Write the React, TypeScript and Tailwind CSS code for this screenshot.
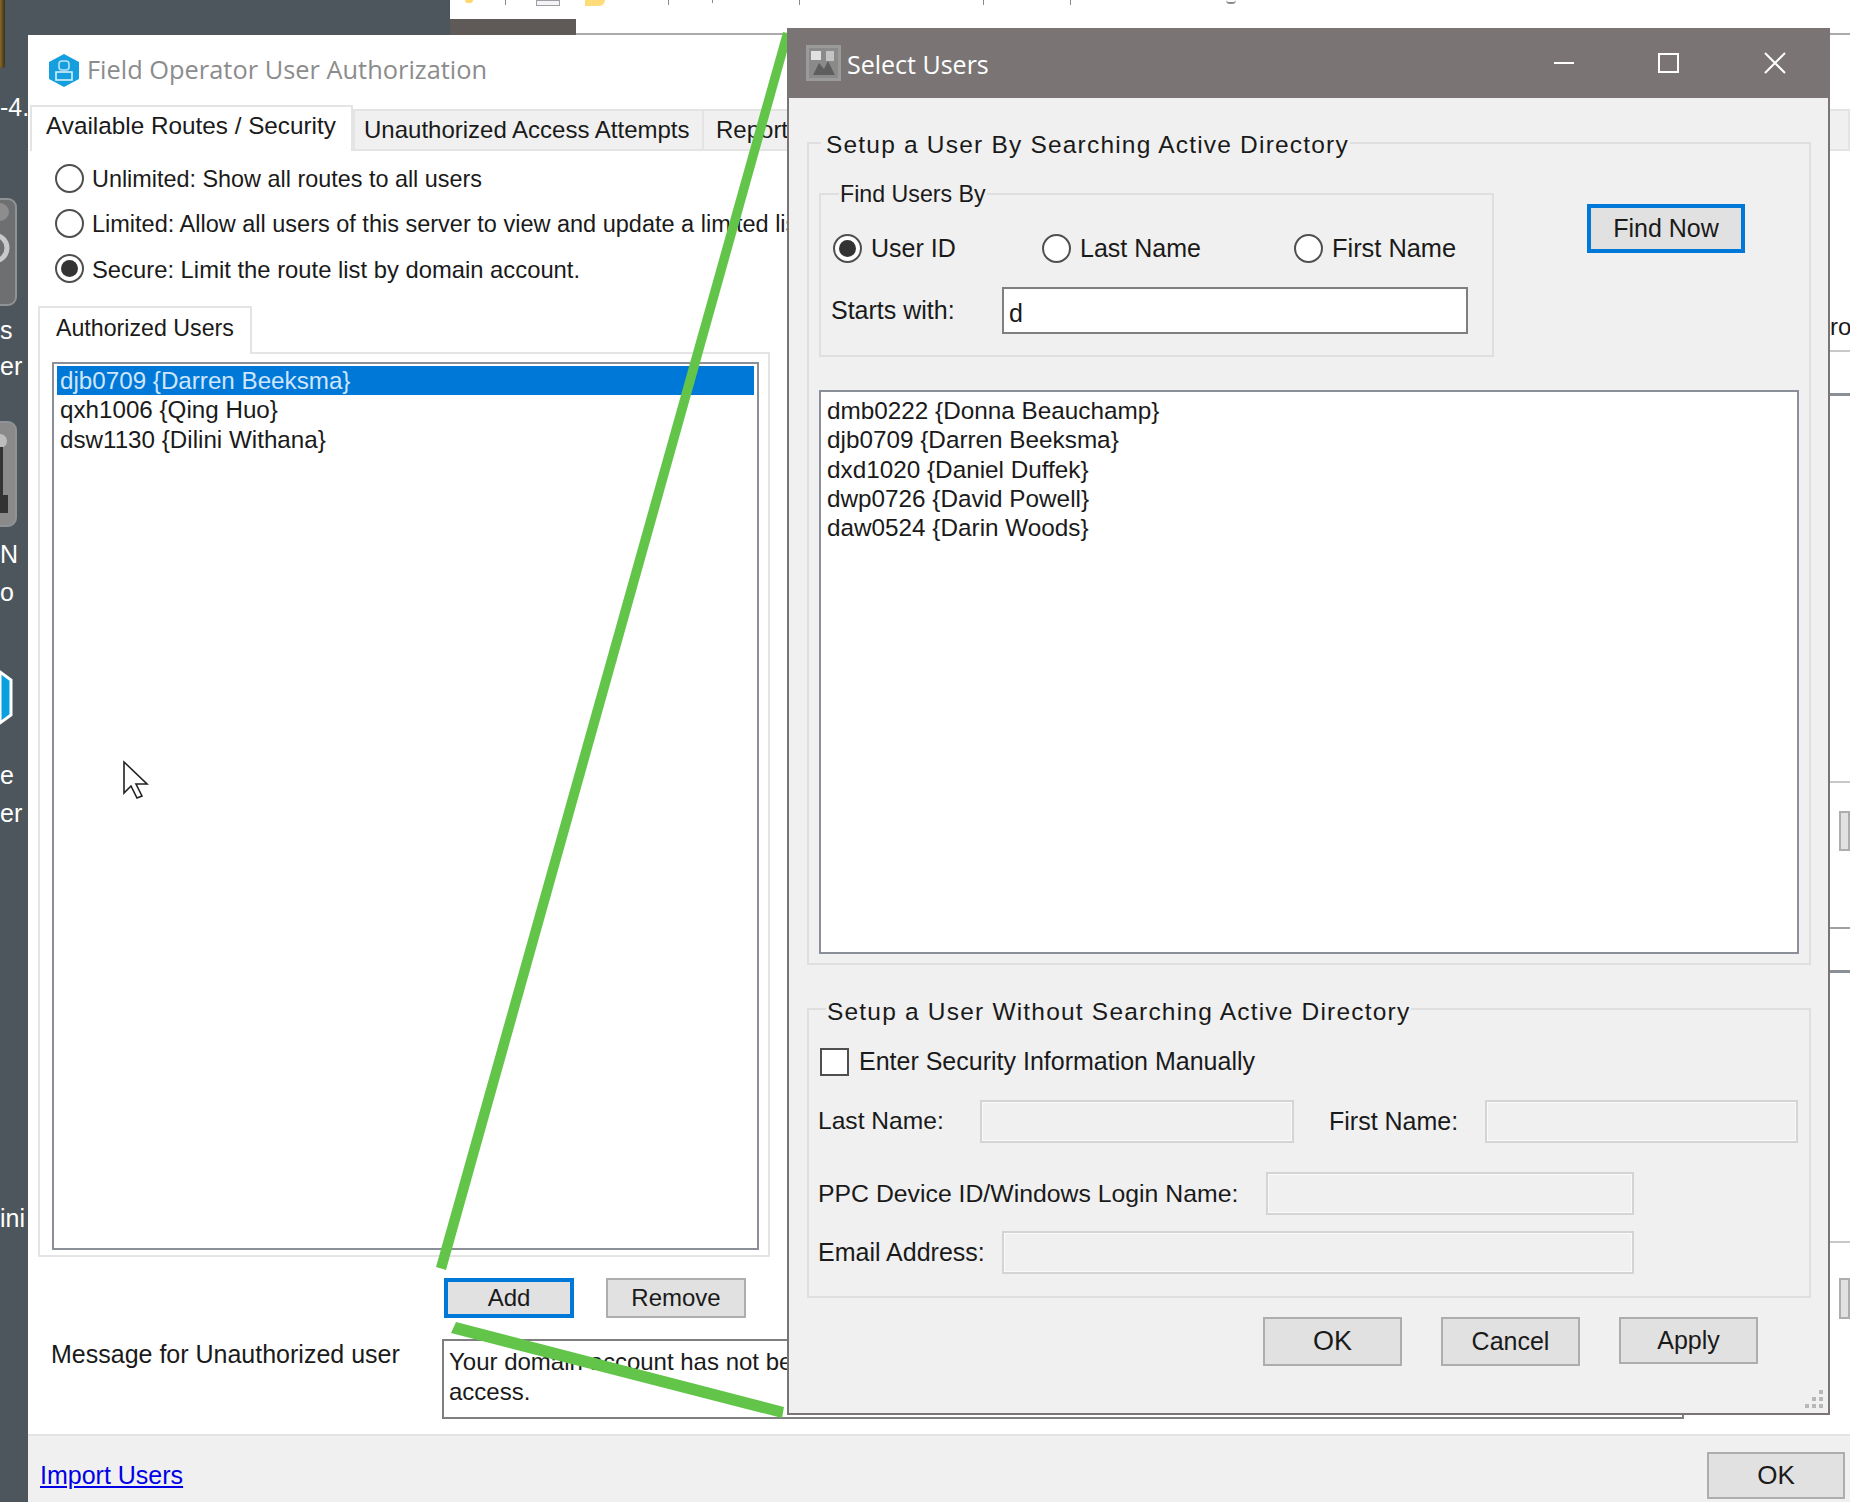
import React from "react";

const sans = "font-['Liberation_Sans',Arial,sans-serif]";
const segoe = "font-['Open_Sans','Noto_Sans',sans-serif]";

const Radio = ({ checked }: { checked?: boolean }) => (
  <span className="flex h-[29px] w-[29px] shrink-0 items-center justify-center rounded-full border-2 border-[#4f4f4f] bg-white">
    {checked && <span className="h-[17px] w-[17px] rounded-full bg-[#333333]" />}
  </span>
);

const WinButton = ({ label, focused, className }: { label: string; focused?: boolean; className: string }) => (
  <div
    className={`flex items-center justify-center bg-[#e1e1e1] text-[#1a1a1a] ${
      focused ? "border-[4px] border-[#0078d7]" : "border-2 border-[#adadad]"
    } ${className}`}
  >
    {label}
  </div>
);

const DisabledInput = ({ className }: { className: string }) => (
  <div className={`h-[43px] border-2 border-[#d4d4d4] bg-[#f0f0f0] shadow-[inset_0_0_0_1px_#fafafa] ${className}`} />
);

const Desktop = () => (
  <>
    <div className="absolute left-0 top-0 h-[68px] w-[5px] rounded-b bg-gradient-to-r from-[#8a6a20] to-[#3a3020]" />
    <div className="absolute left-0 top-[92px] text-[25px] leading-[30px] text-white">-4.</div>
    <svg className="absolute left-0 top-[198px]" width="17" height="108" viewBox="0 0 17 108">
      <rect x="-20" y="1" width="36" height="106" rx="8" fill="#6d6f70" stroke="#8f9396" strokeWidth="2" />
      <circle cx="-6" cy="50" r="13" fill="none" stroke="#c9c9c9" strokeWidth="5" />
      <circle cx="0" cy="14" r="9" fill="#8d8d8d" />
    </svg>
    <svg className="absolute left-0 top-[421px]" width="17" height="106" viewBox="0 0 17 106">
      <rect x="-20" y="1" width="36" height="104" rx="8" fill="#8a8a8a" stroke="#8f9396" strokeWidth="2" />
      <circle cx="0" cy="20" r="7" fill="#bdbdbd" />
      <path d="M-2 26 H3 V74 H8 V92 H0 Z" fill="#333333" />
    </svg>
    <svg className="absolute left-0 top-[660px]" width="14" height="74" viewBox="0 0 14 74">
      <path d="M0 12 L11 20 V55 L0 63 Z" fill="#0a9fdf" stroke="#ffffff" strokeWidth="3" />
    </svg>
    <div className="absolute left-0 top-[312px] text-[25px] leading-[36px] text-white">
      s
      <br />
      er
    </div>
    <div className="absolute left-0 top-[535px] text-[25px] leading-[38px] text-white">
      N
      <br />o
    </div>
    <div className="absolute left-0 top-[756px] text-[25px] leading-[38px] text-white">
      e
      <br />
      er
    </div>
    <div className="absolute left-0 top-[1203px] text-[25px] leading-[30px] text-white">ini</div>
  </>
);

const TopStrip = () => (
  <div className="absolute left-[450px] right-0 top-0 h-[33px] bg-white">
    <div className="absolute left-0 top-[19px] h-[16px] w-[126px] bg-[#5f5a58]" />
    <div className="absolute left-[15px] top-0 h-[3px] w-[8px] rounded-b bg-[#ffd76a]" />
    <div className="absolute left-[55px] top-0 h-[5px] w-[1px] bg-[#888888]" />
    <div className="absolute left-[86px] top-0 h-[6px] w-[24px] border border-[#a0a0a0] bg-[#f3f3f8]" />
    <div className="absolute left-[135px] top-0 h-[6px] w-[20px] rounded-br-lg bg-[#ffdc7a]" />
    <div className="absolute left-[218px] top-0 h-[5px] w-[1px] bg-[#888888]" />
    <div className="absolute left-[262px] top-0 h-[3px] w-[1px] bg-[#888888]" />
    <div className="absolute left-[349px] top-0 h-[5px] w-[1px] bg-[#888888]" />
    <div className="absolute left-[533px] top-0 h-[5px] w-[1px] bg-[#888888]" />
    <div className="absolute left-[620px] top-0 h-[5px] w-[1px] bg-[#888888]" />
    <div className="absolute left-[776px] top-0 h-[4px] w-[10px] rounded-b-full border-b-2 border-[#8a8a8a]" />
  </div>
);

const Parent = () => (
  <div className={`absolute left-[28px] top-[35px] flex h-[1467px] w-[1822px] flex-col bg-white ${sans}`}>
    <div className="absolute left-[548px] right-0 top-[-2px] h-[2px] bg-[#ababab]" />
    <div className="flex h-[70px] items-center pl-[20px]">
      <svg width="32" height="33" viewBox="0 0 32 33">
        <path d="M16 0 L31 8 V25 L16 33 L1 25 V8 Z" fill="#159fdf" />
        <rect x="11" y="7" width="10" height="9" rx="3" fill="none" stroke="#b9e4f7" strokeWidth="1.6" />
        <rect x="8" y="18" width="16" height="8" fill="none" stroke="#d7f0fb" strokeWidth="1.6" />
      </svg>
      <span className={`mb-[1px] ml-[7px] text-[25.4px] leading-none text-[#8c8c8c] ${segoe}`}>Field Operator User Authorization</span>
    </div>
    <div className="flex h-[46px] items-end text-[24px] text-[#1a1a1a]">
      <div className="z-10 ml-[2px] flex h-[46px] w-[323px] items-center border-x-2 border-t-2 border-[#e4e4e4] bg-white pb-[6px] pl-[14px] text-[24.3px]">
        Available Routes / Security
      </div>
      <div className="flex h-[42px] flex-1 items-center border-2 border-[#e4e4e4] bg-[#f0f0f0]">
        <span className="w-[349px] border-r-2 border-[#e4e4e4] pl-[9px] leading-[38px]">Unauthorized Access Attempts</span>
        <span className="pl-[12px]">Reports</span>
      </div>
    </div>
    <div className="flex min-h-0 flex-1">
      <div className="flex w-[742px] flex-col">
        <div className="flex flex-col pl-[27px] pt-[5px] text-[23.5px] text-[#1a1a1a]">
          <div className="flex h-[45px] items-center gap-[8px]">
            <Radio />
            <span className="pt-[3px] text-[23.4px]">Unlimited: Show all routes to all users</span>
          </div>
          <div className="flex h-[45px] items-center gap-[8px] whitespace-nowrap">
            <Radio />
            <span className="pt-[2px]">Limited: Allow all users of this server to view and update a limited list</span>
          </div>
          <div className="flex h-[45px] items-center gap-[8px]">
            <Radio checked />
            <span className="pt-[2px] text-[23.8px]">Secure: Limit the route list by domain account.</span>
          </div>
        </div>
        <div className="z-10 ml-[10px] mt-[15px] flex h-[48px] w-[214px] items-center border-x-2 border-t-2 border-[#e4e4e4] bg-white pb-[5px] pl-[16px] text-[23.2px] text-[#1a1a1a]">
          Authorized Users
        </div>
        <div className="ml-[10px] mt-[-2px] h-[905px] w-[732px] border-2 border-[#e4e4e4] pb-[5px] pl-[12px] pr-[9px] pt-[8px]">
          <div className="h-full border-2 border-[#8a8f98] px-[3px] py-[2px] text-[24.2px] leading-[28.4px] text-[#1a1a1a]">
            <div className="bg-[#0078d7] pl-[3px] pt-[1px] text-[#cfe6fb]">{"djb0709 {Darren Beeksma}"}</div>
            <div className="pl-[3px] pt-[1px]">{"qxh1006 {Qing Huo}"}</div>
            <div className="pl-[3px] pt-[1px]">{"dsw1130 {Dilini Withana}"}</div>
          </div>
        </div>
        <div className="ml-[416px] mt-[21px] flex gap-[32px] text-[24px]">
          <WinButton label="Add" focused className="h-[40px] w-[130px]" />
          <WinButton label="Remove" className="h-[40px] w-[140px]" />
        </div>
        <div className="mt-[21px] flex text-[24px] text-[#1a1a1a]">
          <div className="ml-[23px] w-[391px] shrink-0 whitespace-nowrap text-[25px] leading-[30px]">Message for Unauthorized user</div>
          <div className="h-[80px] w-[1242px] shrink-0 border-2 border-[#7f7f7f] pl-[5px] pt-[6px] leading-[30px]">
            Your domain account has not been
            <br />
            access.
          </div>
        </div>
      </div>
      <div className="ml-auto flex w-[20px] flex-col text-[24px]">
        <div className="mt-[158px] h-[36px] overflow-hidden leading-[36px] text-[#1a1a1a]">ro</div>
        <div className="mt-[5px] h-[2px] bg-[#c8c8c8]" />
        <div className="mt-[41px] h-[3px] bg-[#8a8f98]" />
        <div className="mt-[385px] h-[2px] bg-[#c8c8c8]" />
        <div className="ml-[9px] mt-[28px] h-[40px] border-2 border-[#adadad] bg-[#e1e1e1]" />
        <div className="mt-[76px] h-[2px] bg-[#a0a0a0]" />
        <div className="mt-[41px] h-[3px] bg-[#8a8f98]" />
        <div className="mt-[268px] h-[2px] bg-[#c8c8c8]" />
        <div className="ml-[9px] mt-[35px] h-[41px] border-2 border-[#adadad] bg-[#e1e1e1]" />
      </div>
    </div>
    <div className="flex h-[68px] shrink-0 items-start justify-between border-t-2 border-[#e4e4e4] bg-[#f0f0f0] pl-[12px] pr-[5px] text-[25px]">
      <span className="mt-[24px] leading-[30px] text-[#0000e6] underline">Import Users</span>
      <WinButton label="OK" className="mt-[16px] h-[47px] w-[138px] text-[26px]" />
    </div>
  </div>
);

const Annotation = () => (
  <svg className="absolute left-0 top-0" width="1850" height="1502" viewBox="0 0 1850 1502">
    <polygon points="783,32 792,34 446,1270 436,1267" fill="#62c54a" />
    <polygon points="456,1322 451,1333 782,1418 784,1407" fill="#62c54a" />
  </svg>
);

const SelectUsers = () => (
  <div className={`absolute left-[787px] top-[28px] flex h-[1387px] w-[1043px] flex-col border-2 border-t-0 border-[#7a7574] bg-[#f0f0f0] text-[25px] text-[#1a1a1a] ${sans}`}>
    <div className="flex h-[70px] shrink-0 items-center bg-[#7a7574] pl-[17px]">
      <svg width="35" height="36" viewBox="0 0 35 36">
        <rect width="35" height="36" fill="#9a9a9a" />
        <rect x="3" y="3" width="29" height="30" fill="#8a8a8a" />
        <rect x="5" y="6" width="10" height="9" fill="#e0e0e0" />
        <path d="M20 6 h8 v10 h-8z" fill="#c4c4c4" />
        <path d="M7 30 l6 -12 l5 6 l4 -8 l7 14z" fill="#5e5e5e" />
      </svg>
      <span className={`ml-[6px] pt-[3px] text-[25px] text-white ${segoe}`}>Select Users</span>
      <svg className="ml-auto mr-[42px]" width="232" height="22" viewBox="0 0 232 22" fill="none" stroke="#ffffff" strokeWidth="2">
        <path d="M0 11 H20" />
        <rect x="105" y="2" width="19" height="18" />
        <path d="M211 1 L231 21 M231 1 L211 21" />
      </svg>
    </div>

    <div className="ml-[18px] mt-[44px] h-[823px] w-[1004px] border-2 border-[#dfdfdf] pl-[10px] pr-[11px]">
      <div className="mt-[-17px] flex h-[36px] items-center">
        <span className="ml-[2px] bg-[#f0f0f0] pl-[5px] pr-[1px] text-[24.5px] tracking-[1.2px]">Setup a User By Searching Active Directory</span>
      </div>
      <div className="mt-[30px] flex items-start">
        <div className="h-[164px] w-[675px] shrink-0 border-2 border-[#dfdfdf] pl-[12px]">
          <div className="mt-[-17px] flex h-[32px] items-center">
            <span className="ml-[6px] bg-[#f0f0f0] pl-[1px] pr-[1px] text-[23.2px]">Find Users By</span>
          </div>
          <div className="mt-[24px] flex h-[29px] items-center">
            <Radio checked />
            <span className="ml-[9px] w-[171px]">User ID</span>
            <Radio />
            <span className="ml-[9px] w-[214px]">Last Name</span>
            <Radio />
            <span className="ml-[9px] text-[25.4px]">First Name</span>
          </div>
          <div className="-ml-[2px] mt-[24px] flex h-[47px] items-start">
            <span className="mt-[8px] w-[171px] leading-[30px]">Starts with:</span>
            <div className="h-[47px] w-[466px] border-2 border-[#7f7f7f] bg-white pl-[5px] pt-[9px] leading-[30px]">d</div>
          </div>
        </div>
        <WinButton label="Find Now" focused className="ml-[93px] mt-[11px] h-[49px] w-[158px] shrink-0" />
      </div>
      <div className="mt-[33px] h-[564px] w-[980px] border-2 border-[#8a8f98] bg-white pl-[6px] pt-[4px] text-[24.3px] leading-[29.3px]">
        <div>{"dmb0222 {Donna Beauchamp}"}</div>
        <div>{"djb0709 {Darren Beeksma}"}</div>
        <div>{"dxd1020 {Daniel Duffek}"}</div>
        <div>{"dwp0726 {David Powell}"}</div>
        <div>{"daw0524 {Darin Woods}"}</div>
      </div>
    </div>

    <div className="ml-[18px] mt-[43px] h-[290px] w-[1004px] border-2 border-[#dfdfdf] pl-[9px]">
      <div className="mt-[-16px] flex h-[36px] items-center">
        <span className="ml-[8px] bg-[#f0f0f0] pl-[1px] pr-[1px] text-[24.5px] tracking-[1.2px]">Setup a User Without Searching Active Directory</span>
      </div>
      <div className="mt-[18px] flex h-[28px] items-center">
        <div className="ml-[2px] h-[28px] w-[29px] border-2 border-[#4f4f4f] bg-white" />
        <span className="ml-[10px]">Enter Security Information Manually</span>
      </div>
      <div className="mt-[24px] flex items-center">
        <span className="w-[162px] text-[24.6px]">Last Name:</span>
        <DisabledInput className="w-[314px]" />
        <span className="ml-[35px] w-[156px]">First Name:</span>
        <DisabledInput className="w-[313px]" />
      </div>
      <div className="mt-[29px] flex items-center">
        <span className="w-[448px] text-[24.8px]">PPC Device ID/Windows Login Name:</span>
        <DisabledInput className="w-[368px]" />
      </div>
      <div className="mt-[16px] flex items-center">
        <span className="w-[184px]">Email Address:</span>
        <DisabledInput className="w-[632px]" />
      </div>
    </div>

    <div className="ml-[474px] mt-[19px] flex items-start gap-[39px]">
      <WinButton label="OK" className="h-[49px] w-[139px] text-[27px]" />
      <WinButton label="Cancel" className="h-[49px] w-[139px]" />
      <WinButton label="Apply" className="h-[47px] w-[139px]" />
    </div>

    <svg className="absolute bottom-[3px] right-[3px]" width="20" height="20" viewBox="0 0 20 20" fill="#b8b8b8">
      <rect x="14" y="0" width="4" height="4" />
      <rect x="7" y="7" width="4" height="4" />
      <rect x="14" y="7" width="4" height="4" />
      <rect x="0" y="14" width="4" height="4" />
      <rect x="7" y="14" width="4" height="4" />
      <rect x="14" y="14" width="4" height="4" />
    </svg>
  </div>
);

const App = () => (
  <div className={`relative h-[1502px] w-[1850px] overflow-hidden bg-[#4d565c] ${sans}`}>
    <Desktop />
    <TopStrip />
    <Parent />
    <svg className="absolute left-[122px] top-[760px]" width="28" height="41" viewBox="0 0 28 41">
      <path d="M2 2 V33 L9 26 L15 38 L20 36 L14 24 H25 Z" fill="#ffffff" stroke="#222222" strokeWidth="1.6" />
    </svg>
    <Annotation />
    <SelectUsers />
  </div>
);

export default App;
